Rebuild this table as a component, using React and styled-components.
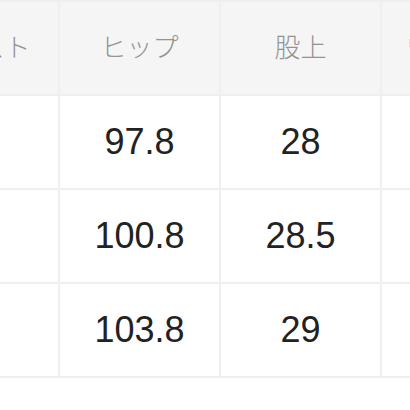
import React from "react";
import styled, { createGlobalStyle } from "styled-components";

const GlobalStyle = createGlobalStyle`
  html, body {
    margin: 0;
    padding: 0;
    background: #ffffff;
    overflow: hidden;
  }
`;

// the table is wider than the window: the first and last columns are cut off
const SizeTable = styled.div`
  display: grid;
  grid-template-columns: 159px 159px 159px 152px;
  grid-auto-rows: 92px;
  gap: 2px;
  padding: 2px;
  width: max-content;
  margin-left: -103px;
  background: #efefef;
`;

const Cell = styled.div`
  display: flex;
  align-items: center;
  justify-content: center;
  white-space: nowrap;
  background: ${(p) => (p.$head ? "#f5f5f5" : "#ffffff")};
  color: ${(p) => (p.$head ? "#939393" : "#222222")};
  font-family: ${(p) =>
    p.$head
      ? '"Noto Sans CJK JP", "Noto Sans", sans-serif'
      : '"Liberation Sans", Arial, sans-serif'};
  font-size: ${(p) => (p.$head ? "26px" : "36px")};
  font-weight: ${(p) => (p.$head ? 300 : 400)};
  padding-bottom: ${(p) => (p.$head ? "6px" : "0")};
`;

const headers = ["ウエスト", "ヒップ", "股上", "ワタリ幅"];

const rows = [
  ["70", "97.8", "28", "31"],
  ["73", "100.8", "28.5", "32"],
  ["76", "103.8", "29", "33"],
];

const App = () => {
  return (
    <>
      <GlobalStyle />
      <SizeTable>
        {headers.map((h) => (
          <Cell key={h} $head>
            {h}
          </Cell>
        ))}
        {rows.map((row, i) =>
          row.map((value, j) => <Cell key={`${i}-${j}`}>{value}</Cell>)
        )}
      </SizeTable>
    </>
  );
};

export default App;
